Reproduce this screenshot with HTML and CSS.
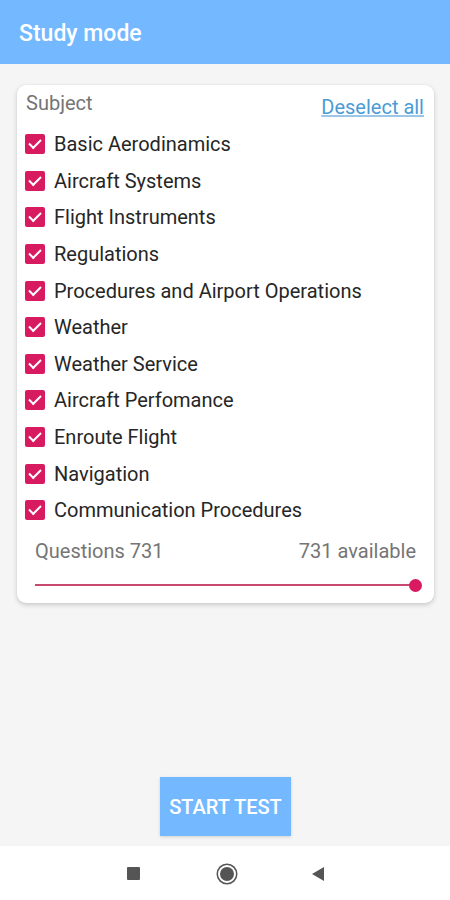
FILE: index.html
```html
<!DOCTYPE html>
<html lang="en">
   <head>
      <meta charset="UTF-8">
      <meta name="viewport" content="width=device-width, initial-scale=1.0">
      <title>Study mode</title>
      <link rel="stylesheet" href="styles.css">
   </head>
   <body>
      <div class="screen">
         <div class="app-bar">Study mode</div>
         <div class="content">
            <div class="card">
               <div class="card-head">
                  <span class="label">Subject</span>
                  <a class="deselect" href="#">Deselect all</a>
               </div>
               <ul class="subjects">
                  <li><span class="check"></span>Basic Aerodinamics</li>
                  <li><span class="check"></span>Aircraft Systems</li>
                  <li><span class="check"></span>Flight Instruments</li>
                  <li><span class="check"></span>Regulations</li>
                  <li><span class="check"></span>Procedures and Airport Operations</li>
                  <li><span class="check"></span>Weather</li>
                  <li><span class="check"></span>Weather Service</li>
                  <li><span class="check"></span>Aircraft Perfomance</li>
                  <li><span class="check"></span>Enroute Flight</li>
                  <li><span class="check"></span>Navigation</li>
                  <li><span class="check"></span>Communication Procedures</li>
               </ul>
               <div class="questions">
                  <span>Questions 731</span>
                  <span>731 available</span>
               </div>
               <div class="slider">
                  <div class="track"></div>
                  <div class="thumb"></div>
               </div>
            </div>
            <button class="start-btn">START TEST</button>
         </div>
         <div class="nav-bar">
            <span class="nav-square"></span>
            <span class="nav-home"></span>
            <span class="nav-back"></span>
         </div>
      </div>
   </body>
</html>
```
FILE: styles.css
```css
body {
   margin: 0;
   background: #f5f5f5;
   font-family: Roboto, sans-serif;
}
.screen {
   height: 900px;
   display: flex;
   flex-direction: column;
}
.app-bar {
   height: 64px;
   flex-shrink: 0;
   background: #74b9ff;
   color: #fff;
   font-size: 23px;
   font-weight: 500;
   padding-left: 19px;
   padding-top: 2px;
   display: flex;
   align-items: center;
   box-sizing: border-box;
}
.content {
   flex: 1;
   display: flex;
   flex-direction: column;
   align-items: center;
   padding: 21px 16px 10px 17px;
}
.card {
   align-self: stretch;
   background: #fff;
   border-radius: 9px;
   box-shadow: 0 2px 5px rgba(0, 0, 0, 0.18), 0 0 2px rgba(0, 0, 0, 0.06);
   padding: 6px 10px 0 8px;
   height: 518px;
   box-sizing: border-box;
}
.card-head {
   display: flex;
   justify-content: space-between;
   align-items: flex-start;
   height: 35px;
}
.label {
   color: #757575;
   font-size: 20px;
   padding-left: 1px;
}
.deselect {
   color: #4b9bd6;
   font-size: 20px;
   margin-top: 4px;
   text-decoration: underline;
   text-decoration-color: #9cc6e8;
}
.subjects {
   list-style: none;
   margin: 0;
   padding: 0;
}
.subjects li {
   height: 36.6px;
   display: flex;
   align-items: center;
   font-size: 20px;
   color: #262626;
}
.check {
   width: 20px;
   height: 20px;
   border-radius: 2px;
   background: #d81b60;
   margin-right: 9px;
   position: relative;
   flex-shrink: 0;
}
.check::after {
   content: "";
   position: absolute;
   left: 4px;
   top: 3px;
   width: 10px;
   height: 5px;
   border-left: 2.6px solid #fff;
   border-bottom: 2.6px solid #fff;
   transform: translate(0px, 2px) rotate(-45deg);
}
.questions {
   display: flex;
   justify-content: space-between;
   color: #757575;
   font-size: 20px;
   padding: 10px 8px 0 10px;
}
.slider {
   position: relative;
   margin: 16px 8px 0 10px;
   height: 13px;
}
.track {
   position: absolute;
   left: 0;
   right: 0;
   top: 5px;
   height: 2px;
   background: #c8486f;
}
.thumb {
   position: absolute;
   right: -6px;
   top: 0;
   width: 13px;
   height: 13px;
   border-radius: 50%;
   background: #d81b60;
}
.start-btn {
   margin-top: auto;
   width: 131px;
   height: 59px;
   border: none;
   background: #74b9ff;
   color: #fff;
   font-family: Roboto, sans-serif;
   font-size: 20px;
   font-weight: 500;
   box-shadow: 0 1px 3px rgba(0, 0, 0, 0.15);
}
.nav-bar {
   height: 53px;
   flex-shrink: 0;
   background: #fff;
   display: flex;
   align-items: center;
   justify-content: center;
   padding-top: 1px;
}
.nav-square {
   width: 13px;
   height: 13px;
   background: #555;
   border-radius: 1px;
   margin-right: 78px;
}
.nav-home {
   width: 14px;
   height: 14px;
   border-radius: 50%;
   background: #555;
   border: 2px solid #fff;
   box-shadow: 0 0 0 1.5px #555;
   margin-right: 76px;
}
.nav-back {
   width: 0;
   height: 0;
   border-top: 7px solid transparent;
   border-bottom: 7px solid transparent;
   border-right: 12px solid #555;
}
```
